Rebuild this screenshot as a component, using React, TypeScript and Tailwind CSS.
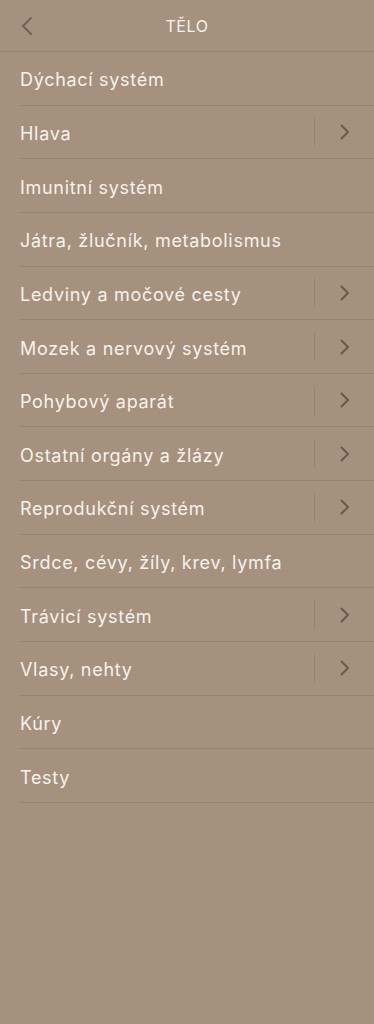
const items = [
  { name: 'Dýchací systém', sub: false },
  { name: 'Hlava', sub: true },
  { name: 'Imunitní systém', sub: false },
  { name: 'Játra, žlučník, metabolismus', sub: false },
  { name: 'Ledviny a močové cesty', sub: true },
  { name: 'Mozek a nervový systém', sub: true },
  { name: 'Pohybový aparát', sub: true },
  { name: 'Ostatní orgány a žlázy', sub: true },
  { name: 'Reprodukční systém', sub: true },
  { name: 'Srdce, cévy, žíly, krev, lymfa', sub: false },
  { name: 'Trávicí systém', sub: true },
  { name: 'Vlasy, nehty', sub: true },
  { name: 'Kúry', sub: false },
  { name: 'Testy', sub: false },
]

export default function App() {
  return (
    <div className="min-h-[1024px] w-[374px] bg-[#a6917e] font-['Inter',sans-serif] text-[#f7f2ec]">
      {/* Header */}
      <div className="relative flex h-[52px] items-center justify-center border-b border-[#978370]">
        <svg className="absolute left-[20px] top-[16px]" width="14" height="20" viewBox="0 0 14 20" fill="none">
          <polyline points="11,2 3,10 11,18" stroke="#6f6358" strokeWidth="2" strokeLinecap="round" strokeLinejoin="round" />
        </svg>
        <span className="pt-[1px] text-[16px] tracking-[0.6px]">TĚLO</span>
      </div>

      {/* List */}
      <div className="pl-[20px]">
        {items.map((item) => (
          <div
            key={item.name}
            className="flex h-[53.65px] items-center border-b border-[#978370]"
          >
            <span className="flex-1 pt-[3px] text-[18px] font-normal tracking-[0.7px]">{item.name}</span>
            {item.sub && (
              <div className="flex h-full items-center">
                <div className="h-[29px] w-px bg-[#978370]" />
                <div className="flex w-[59px] items-center justify-center pl-[1px]">
                  <svg width="12" height="16" viewBox="0 0 12 16" fill="none">
                    <polyline points="2.5,1.5 9,8 2.5,14.5" stroke="#675b51" strokeWidth="2" strokeLinecap="round" strokeLinejoin="round" />
                  </svg>
                </div>
              </div>
            )}
          </div>
        ))}
      </div>
    </div>
  )
}
